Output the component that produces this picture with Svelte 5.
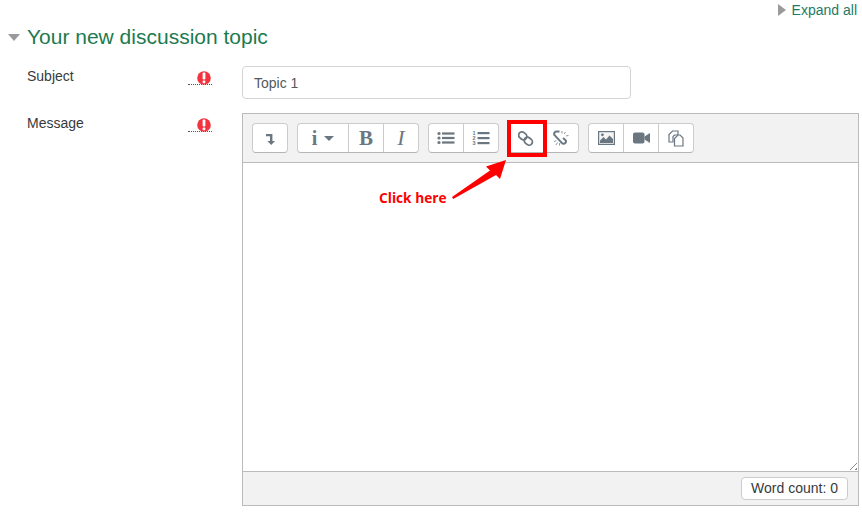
<script lang="ts">
  let subject = "Topic 1";
</script>

{#snippet required()}
  <span class="required" title="Required">
    <svg width="16" height="16" viewBox="0 0 16 16" aria-hidden="true">
      <circle cx="8" cy="8" r="6.8" fill="#f5333f" />
      <rect x="6.6" y="2.6" width="2.8" height="6.8" rx="1" fill="#fff" />
      <rect x="6.6" y="10.4" width="2.8" height="2.8" rx="1" fill="#fff" />
    </svg>
  </span>
{/snippet}

<div class="page">
  <div class="expand">
    <span class="tri-right"></span>
    <a href="#top">Expand all</a>
  </div>

  <h3 class="legend"><span class="tri-down"></span>Your new discussion topic</h3>

  <div class="row subject-row">
    <div class="label">Subject</div>
    {@render required()}
    <input class="text" type="text" bind:value={subject} />
  </div>

  <div class="row message-row">
    <div class="label">Message</div>
    {@render required()}
    <div class="editor">
      <div class="toolbar">
        <div class="group">
          <button class="btn w34" aria-label="Toolbar">
            <svg width="14" height="14" viewBox="0 0 14 14"><path d="M3 3h6.400v7H12L8.200 14 4.400 10H7V5.200H3z" fill="#6b7780" /></svg>
          </button>
        </div>
        <div class="group">
          <button class="btn w50" aria-label="Paragraph styles">
            <span class="glyph-i">i</span><span class="caret"></span>
          </button>
          <button class="btn w35 glyph-b">B</button>
          <button class="btn w35 glyph-it">I</button>
        </div>
        <div class="group">
          <button class="btn w34" aria-label="Unordered list">
            <svg width="18" height="14" viewBox="0 0 18 14" fill="#6b7780">
              <circle cx="2" cy="2.500" r="1.600" /><circle cx="2" cy="7" r="1.600" /><circle cx="2" cy="11.500" r="1.600" />
              <rect x="5" y="1.400" width="12.500" height="2.200" /><rect x="5" y="5.900" width="12.500" height="2.200" /><rect x="5" y="10.400" width="12.500" height="2.200" />
            </svg>
          </button>
          <button class="btn w35" aria-label="Ordered list">
            <svg width="18" height="16" viewBox="0 0 18 16" fill="#6b7780">
              <text class="num" x="0.500" y="5">1</text><text class="num" x="0.500" y="10.200">2</text><text class="num" x="0.500" y="15.400">3</text>
              <rect x="5.500" y="2" width="12" height="2.200" /><rect x="5.500" y="7" width="12" height="2.200" /><rect x="5.500" y="12" width="12" height="2.200" />
            </svg>
          </button>
        </div>
        <div class="group">
          <button class="btn w34" aria-label="Link">
            <svg width="16" height="16" viewBox="0 0 16 16" fill="none" stroke="#6b7780" stroke-width="1.800">
              <rect x="0.400" y="2.500" width="8.600" height="6.600" rx="3.300" transform="rotate(40 4.700 5.800)" />
              <rect x="6" y="7.900" width="8.600" height="6.600" rx="3.300" transform="rotate(40 10.300 11.200)" />
            </svg>
          </button>
          <button class="btn w35" aria-label="Unlink">
            <svg width="16" height="16" viewBox="0 0 16 16" fill="none" stroke="#6b7780">
              <path d="M6.500 1.500H3.500a2.300 2.300 0 0 0-1.700 3.900l7 7.500a2.400 2.400 0 0 0 3.900-.3 2.300 2.300 0 0 0-.4-2.700L10 8" stroke-width="2" />
              <path d="M9 1v2.500M12.500 2 11 4M15.500 5.500 12.800 6M1 11.500l2.400-.8M3 15l1.500-2.500M6.500 15.500l.2-2.500" stroke-width="1" stroke="#8f989e" />
            </svg>
          </button>
        </div>
        <div class="group">
          <button class="btn w34" aria-label="Image">
            <svg width="17" height="14" viewBox="0 0 17 14">
              <rect x="0.600" y="0.600" width="15.800" height="12.800" fill="#f4f4f4" stroke="#6b7780" stroke-width="1.200" />
              <path d="M2 12V9.500l3.500-3.500 2.500 2.500 3.500-4L15 8v4z" fill="#6b7780" />
              <circle cx="4.400" cy="3.800" r="1.400" fill="#6b7780" />
            </svg>
          </button>
          <button class="btn w35" aria-label="Video">
            <svg width="17" height="12" viewBox="0 0 17 12" fill="#6b7780">
              <rect x="0" y="0.500" width="11.500" height="11" rx="2" />
              <path d="M11.500 4.500 17 1v10l-5.500-3.500z" />
            </svg>
          </button>
          <button class="btn w35" aria-label="Media">
            <svg width="16" height="17" viewBox="0 0 16 17" fill="#fff" stroke="#6b7780" stroke-width="1.200">
              <path d="M4.500 1H10v4H6.500L5 6.500V12H1V4.500z" />
              <path d="M10 5h2l3 3v8H6.500V8.500z" />
            </svg>
          </button>
        </div>
      </div>

      <div class="content">
        <span class="grip"></span>
      </div>

      <div class="footer">
        <span class="count">Word count: 0</span>
      </div>

      <!-- annotation drawn over the editor -->
      <span class="red-box"></span>
      <span class="hint">Click here</span>
      <svg class="arrow" width="60" height="50" viewBox="0 0 60 50">
        <path d="M1 42 39 15.500 35 11.500 55 5 49 24 45 20 2.200 44z" fill="#f00" />
      </svg>
    </div>
  </div>
</div>

<style>
  :global(body) {
    margin: 0;
    background: #fff;
  }

  .page {
    width: 862px;
    height: 512px;
    overflow: hidden;
    box-sizing: border-box;
    font-family: "Liberation Sans", Arial, sans-serif;
    font-size: 14px;
    color: #373a3c;
  }

  .expand {
    display: flex;
    justify-content: flex-end;
    align-items: center;
    gap: 6px;
    height: 20px;
    padding-right: 5px;
  }

  .expand a {
    color: #1f7a66;
    text-decoration: none;
    font-size: 14px;
  }

  .tri-right {
    width: 0;
    height: 0;
    border-style: solid;
    border-width: 6.500px 0 6.500px 8px;
    border-color: transparent transparent transparent #9a9a9a;
  }

  .legend {
    display: flex;
    align-items: center;
    margin: 5px 0 0 8px;
    height: 24px;
    font-size: 21px;
    font-weight: 400;
    color: #1d7a4f;
  }

  .tri-down {
    width: 0;
    height: 0;
    margin-right: 7px;
    border-style: solid;
    border-width: 7px 6px 0 6px;
    border-color: #9a9a9a transparent transparent transparent;
  }

  .row {
    display: grid;
    grid-template-columns: 161px 54px 1fr;
    padding-left: 27px;
  }

  .subject-row {
    margin-top: 17px;
  }

  .message-row {
    margin-top: 14px;
  }

  .label {
    line-height: 20px;
  }

  .required {
    display: block;
    position: relative;
    width: 24px;
    height: 18px;
    border-bottom: 1px dotted #555;
  }

  .required svg {
    position: absolute;
    left: 8px;
    top: 4px;
  }

  .text {
    box-sizing: border-box;
    width: 389px;
    height: 33px;
    padding: 0 11px;
    border: 1px solid #d4d4d4;
    border-radius: 4px;
    font: inherit;
    color: #55595c;
    background: #fff;
  }

  .editor {
    position: relative;
    box-sizing: border-box;
    width: 617px;
    height: 393px;
    border: 1px solid #bbb;
    display: flex;
    flex-direction: column;
    background: #f2f2f2;
  }

  .toolbar {
    display: flex;
    gap: 9px;
    height: 49px;
    box-sizing: border-box;
    padding: 9px 0 0 9px;
    border-bottom: 1px solid #bbb;
  }

  .group {
    display: flex;
    height: 30px;
    box-sizing: border-box;
    border: 1px solid #ccc;
    border-bottom-color: #b5b5b5;
    border-radius: 4px;
    background: #fff;
  }

  .btn {
    display: flex;
    align-items: center;
    justify-content: center;
    box-sizing: border-box;
    height: 100%;
    padding: 0;
    border: 0;
    border-left: 1px solid #ccc;
    background: transparent;
    color: #6b7780;
  }

  .btn:first-child {
    border-left: 0;
  }

  .w34 {
    width: 34px;
  }

  .w35 {
    width: 35px;
  }

  .w50 {
    width: 50px;
  }

  .glyph-i {
    font: 700 20px "Liberation Serif", serif;
    margin-right: 7px;
  }

  .caret {
    width: 0;
    height: 0;
    border-style: solid;
    border-width: 5px 5px 0 5px;
    border-color: #6b7780 transparent transparent transparent;
  }

  .glyph-b {
    font: 700 21px "Liberation Serif", serif;
  }

  .glyph-it {
    font: italic 400 22px "Liberation Serif", serif;
  }

  .num {
    font: 700 5.500px "Liberation Sans", sans-serif;
  }

  .content {
    position: relative;
    height: 308px;
    background: #fff;
    border-bottom: 1px solid #bbb;
  }

  .grip {
    position: absolute;
    right: 1px;
    bottom: 1px;
    width: 11px;
    height: 11px;
    background: repeating-linear-gradient(135deg, transparent 0 2px, #888 2px 3px, transparent 3px 4px);
    clip-path: polygon(100% 0, 100% 100%, 0 100%);
  }

  .footer {
    flex: 1;
    display: flex;
    justify-content: flex-end;
    align-items: center;
    padding-right: 10px;
  }

  .count {
    box-sizing: border-box;
    height: 23px;
    padding: 0 9px;
    line-height: 21px;
    border: 1px solid #ccc;
    border-radius: 4px;
    background: #fff;
  }

  .red-box {
    position: absolute;
    left: 264px;
    top: 6px;
    width: 40px;
    height: 37px;
    box-sizing: border-box;
    border: 4px solid #f00;
  }

  .hint {
    position: absolute;
    left: 136px;
    top: 74px;
    font: 700 13.700px "Open Sans", sans-serif;
    color: #f00;
  }

  .arrow {
    position: absolute;
    left: 208px;
    top: 41px;
  }
</style>
